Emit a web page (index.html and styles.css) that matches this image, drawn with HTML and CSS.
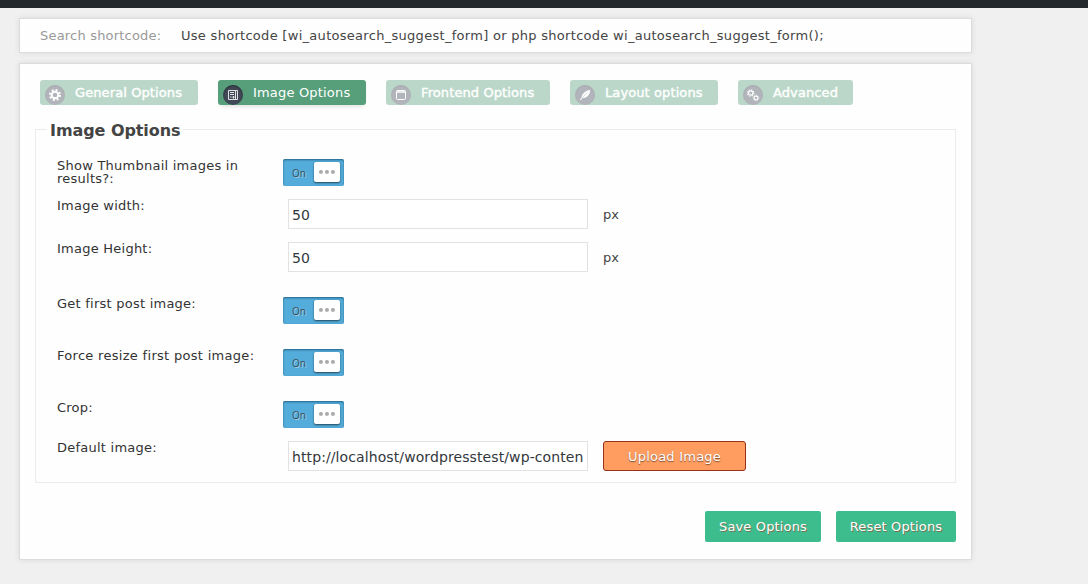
FILE: index.html
```html
<!DOCTYPE html>
<html lang="en">
<head>
<meta charset="utf-8">
<title>Image Options</title>
<link rel="stylesheet" href="styles.css">
</head>
<body>
<div class="adminbar"></div>
<main class="page">
  <section class="panel shortcode"><span class="shortcode-label">Search shortcode:</span><span class="shortcode-text">Use shortcode [wi_autosearch_suggest_form] or php shortcode wi_autosearch_suggest_form();</span></section>
  <section class="panel options">
    <nav class="tabs">
      <a class="tab t-general"><span class="tab-icon"><svg viewBox="0 0 20 20"><circle cx="10" cy="10" r="3.300" fill="none" stroke="#fff" stroke-width="2"/><circle cx="10" cy="10" r="5" fill="none" stroke="#fff" stroke-width="2" stroke-dasharray="1.960 1.967"/></svg></span><span class="tab-text">General Options</span></a>
      <a class="tab active t-image"><span class="tab-icon"><svg viewBox="0 0 20 20" fill="none" stroke="#fff"><path d="M5.500 5.500h7v9h-7zM12.500 5.500h2v9h-2M7 7.500h4M7 9.500h4M7 12h1.500M10 11.500h1v1.500h-1z" stroke-opacity=".85"/></svg></span><span class="tab-text">Image Options</span></a>
      <a class="tab t-frontend"><span class="tab-icon"><svg viewBox="0 0 20 20" fill="none" stroke="#fff"><rect x="5.500" y="5.500" width="9" height="9" rx="1"/><path d="M5.500 7h9" stroke-width="1.500"/></svg></span><span class="tab-text">Frontend Options</span></a>
      <a class="tab t-layout"><span class="tab-icon"><svg viewBox="0 0 20 20"><path d="M15.200 5C12 5.200 7 8 6.700 12.200L4.800 15l.8.3 2-2.200C12 13 15 9.500 15.200 5z" fill="#fff"/><path d="M7.300 12.700l5-5" stroke="#414856" stroke-width=".5"/></svg></span><span class="tab-text">Layout options</span></a>
      <a class="tab t-advanced"><span class="tab-icon"><svg viewBox="0 0 20 20" fill="none" stroke="#fff"><circle cx="7.700" cy="8" r="2.200" stroke-width="1.200"/><circle cx="7.700" cy="8" r="3.200" stroke-width="1.100" stroke-dasharray="1.250 1.263"/><circle cx="13" cy="13" r="1.900" stroke-width="1.100"/><circle cx="13" cy="13" r="2.700" stroke-width=".9" stroke-dasharray="1.060 1.060"/></svg></span><span class="tab-text">Advanced</span></a>
    </nav>
    <fieldset class="fields">
      <legend>Image Options</legend>
      <div class="row r-thumb"><label>Show Thumbnail images in results?:</label><span class="switch"><span class="on">On</span><span class="knob"><i></i><i></i><i></i></span></span></div>
      <div class="row r-width"><label>Image width:</label><input type="text" value="50"><span class="unit">px</span></div>
      <div class="row r-height"><label>Image Height:</label><input type="text" value="50"><span class="unit">px</span></div>
      <div class="row r-first"><label>Get first post image:</label><span class="switch"><span class="on">On</span><span class="knob"><i></i><i></i><i></i></span></span></div>
      <div class="row r-force"><label>Force resize first post image:</label><span class="switch"><span class="on">On</span><span class="knob"><i></i><i></i><i></i></span></span></div>
      <div class="row r-crop"><label>Crop:</label><span class="switch"><span class="on">On</span><span class="knob"><i></i><i></i><i></i></span></span></div>
      <div class="row r-default"><label>Default image:</label><input class="url" type="text" value="http://localhost/wordpresstest/wp-conten"><button class="upload" type="button">Upload Image</button></div>
    </fieldset>
    <div class="actions"><button class="save" type="button">Save Options</button><button class="reset" type="button">Reset Options</button></div>
  </section>
</main>
</body>
</html>
```
FILE: styles.css
```css
* { box-sizing: border-box; }
html { height: 100%; overflow: hidden; }
body {
  margin: 0;
  height: 100%;
  background: #f0f0f0;
  color: #444;
  font: 13px/16px Verdana, "DejaVu Sans", sans-serif;
}
.adminbar { height: 8px; background: #23282d; }
.page { width: 953px; margin: 10px 0 0 19px; }
.panel {
  border: 1px solid #dcdcdc;
  background: #fefefe;
  box-shadow: 0 0 6px rgba(0, 0, 0, .09);
}
.shortcode { height: 35px; padding: 9px 20px; display: flex; white-space: nowrap; }
.shortcode-label { width: 141px; color: #999; letter-spacing: .2px; }
.shortcode-text { letter-spacing: .29px; }
.options { height: 497px; margin-top: 10px; padding: 16px 15px 0; }

.tabs { display: flex; gap: 20px; padding-left: 5px; }
.tab {
  display: flex;
  height: 25px;
  padding-left: 5px;
  border-radius: 3px;
  background: #579f7b;
  color: #fff;
  letter-spacing: .1px;
  opacity: .4;
  white-space: nowrap;
  -webkit-text-stroke: .4px #fff;
}
.tab.active { opacity: 1; letter-spacing: .18px; -webkit-text-stroke: 0; box-shadow: 0 4px 5px -3px rgba(0, 0, 0, .15); }
.tab-icon { width: 20px; height: 20px; margin: 5px 10px 0 0; border-radius: 50%; background: #414856; box-shadow: inset 0 1px 2px rgba(0, 0, 0, .4); }
.tab-icon svg { display: block; width: 20px; height: 20px; }
.tab-text { line-height: 25px; }
.t-general { width: 158px; }
.t-image { width: 148px; }
.t-frontend { width: 164px; }
.t-layout { width: 148px; }
.t-advanced { width: 115px; }

.fields { width: 921px; height: 363px; margin: 15px 0 0; padding: 0 0 0 21px; border: 1px solid #ebebeb; }
.fields legend { height: 18px; margin-left: -10px; padding: 0 3px; color: #444; font-size: 16px; font-weight: bold; letter-spacing: -.07px; line-height: 21px; }
.row { display: flex; align-items: flex-start; }
.row label { flex: none; width: 226px; color: #333; letter-spacing: .24px; line-height: 13px; }
.r-thumb { height: 40px; margin-top: 21px; }
.r-thumb label { padding-right: 20px; }
.r-width { height: 43px; }
.r-height { height: 55px; }
.r-first, .r-force { height: 52px; }
.r-force label { letter-spacing: .3px; }
.r-crop { height: 40px; }
.switch {
  display: flex;
  width: 61px;
  height: 27px;
  padding: 3px 4px 4px 9px;
  border-radius: 2px;
  background: #53acd9;
  box-shadow: inset 0 1px 2px rgba(0, 50, 80, .6);
}
.on { width: 22px; color: #3d4f5a; font: 10px/22px "Open Sans", sans-serif; text-shadow: 1px 1px 0 rgba(255, 255, 255, .4); }
.knob { display: flex; align-items: center; justify-content: center; gap: 2px; width: 26px; height: 20px; border-radius: 2px; background: #fff; box-shadow: 0 1px 2px rgba(0, 0, 0, .6); }
.knob i { width: 4px; height: 4px; border-radius: 50%; background: linear-gradient(135deg, #999, #bbb); }
input {
  width: 300px;
  height: 30px;
  margin: 0 0 0 5px;
  padding: 1px 3px 0;
  border: 1px solid #e2e2e2;
  background: #fff;
  color: #32373c;
  font: 14px "DejaVu Sans", sans-serif;
}
.url { letter-spacing: .1px; }
.unit { margin: 8px 0 0 15px; }
.upload { width: 143px; height: 30px; margin: 0 0 0 15px; padding: 2px 0 0; border: 1px solid #993018; border-radius: 3px; background: #ff9c60; color: #fff; font: inherit; letter-spacing: .22px; text-shadow: 0 1px 1px rgba(0, 0, 0, .5); }
.actions { display: flex; justify-content: flex-end; gap: 15px; margin-top: 28px; }
.actions button { height: 31px; padding: 0; border: 0; border-radius: 2px; background: #3dbc8d; color: #fff; font: inherit; letter-spacing: .15px; text-shadow: 1px 1px 0 #777353; }
.save { width: 116px; }
.reset { width: 120px; }
```
